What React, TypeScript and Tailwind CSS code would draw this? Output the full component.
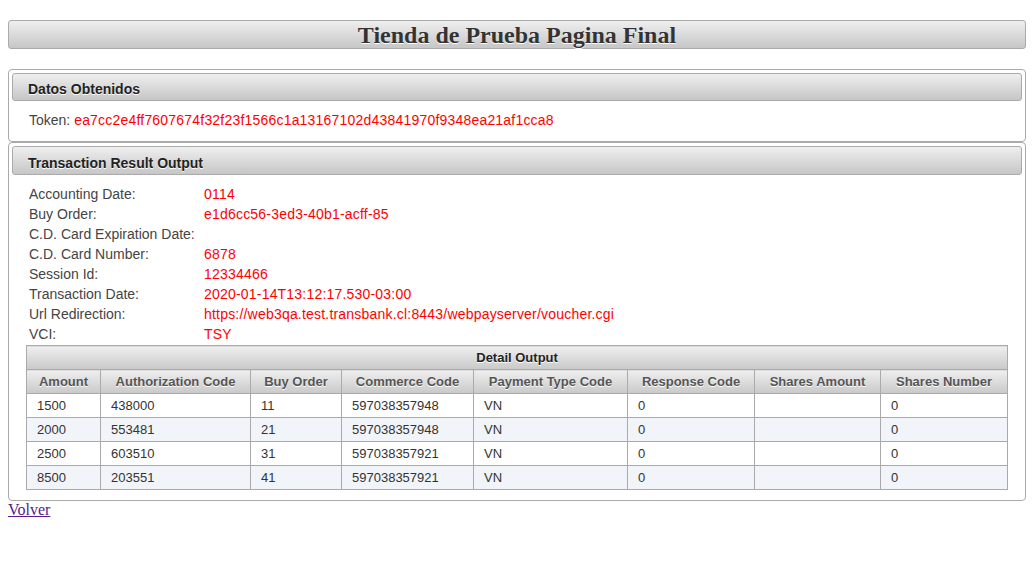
import React from "react";

const fields: [string, string][] = [
  ["Accounting Date:", "0114"],
  ["Buy Order:", "e1d6cc56-3ed3-40b1-acff-85"],
  ["C.D. Card Expiration Date:", ""],
  ["C.D. Card Number:", "6878"],
  ["Session Id:", "12334466"],
  ["Transaction Date:", "2020-01-14T13:12:17.530-03:00"],
  ["Url Redirection:", "https://web3qa.test.transbank.cl:8443/webpayserver/voucher.cgi"],
  ["VCI:", "TSY"],
];

const cols: { name: string; w: string }[] = [
  { name: "Amount", w: "w-[74px]" },
  { name: "Authorization Code", w: "w-[150px]" },
  { name: "Buy Order", w: "w-[91px]" },
  { name: "Commerce Code", w: "w-[132px]" },
  { name: "Payment Type Code", w: "w-[154px]" },
  { name: "Response Code", w: "w-[127px]" },
  { name: "Shares Amount", w: "w-[126px]" },
  { name: "Shares Number", w: "w-[127px]" },
];

const rows: string[][] = [
  ["1500", "438000", "11", "597038357948", "VN", "0", "", "0"],
  ["2000", "553481", "21", "597038357948", "VN", "0", "", "0"],
  ["2500", "603510", "31", "597038357921", "VN", "0", "", "0"],
  ["8500", "203551", "41", "597038357921", "VN", "0", "", "0"],
];

function PanelHeader({ children, cls }: { children: React.ReactNode; cls: string }) {
  return (
    <div
      className={`border border-[#aaaaaa] rounded-[3px] bg-linear-to-b from-[#efefef] to-[#c6c6c6] pl-[15px] ${cls} text-[14px] leading-[18px] font-bold text-[#222222] [text-shadow:0_1px_0_#ffffff]`}
    >
      {children}
    </div>
  );
}

export default function App() {
  return (
    <div className="bg-white min-h-[576px] px-2 pt-5 font-['Liberation_Sans',Arial,sans-serif]">
      <div className="h-[29px] border border-[#aaaaaa] rounded-[3px] bg-linear-to-b from-[#efefef] to-[#c6c6c6] flex items-center justify-center">
        <h1 className="font-['Liberation_Serif','Times_New_Roman',serif] font-bold text-[24px] leading-none text-[#333333] [text-shadow:0_1px_0_#ffffff]">
          Tienda de Prueba Pagina Final
        </h1>
      </div>

      <div className="mt-5 border border-[#aaaaaa] rounded-[4px] p-[3px]">
        <PanelHeader cls="h-[28px] pt-[6px]">Datos Obtenidos</PanelHeader>
        <div className="pl-[17px] pt-[9px] pb-[8px] text-[14px] leading-[20px]">
          <span className="text-[#444444]">Token: </span>
          <span className="text-[#ff0000] tracking-[0.2px]">ea7cc2e4ff7607674f32f23f1566c1a13167102d43841970f9348ea21af1cca8</span>
        </div>
      </div>

      <div className="border border-[#aaaaaa] rounded-[4px] p-[3px]">
        <PanelHeader cls="h-[29px] pt-[7px]">Transaction Result Output</PanelHeader>
        <div className="pl-[17px] pt-[9px] text-[14px] leading-[20px]">
          {fields.map(([k, v]) => (
            <div key={k} className="flex">
              <span className="w-[175px] shrink-0 text-[#444444]">{k}</span>
              <span className="text-[#ff0000] tracking-[0.2px]">{v}</span>
            </div>
          ))}
        </div>
        <div className="pl-[14px] pr-[14px] pt-[1px] pb-[7px]">
          <table className="w-full table-fixed border-collapse text-[13px] text-[#333333]">
            <colgroup>
              {cols.map((c) => (
                <col key={c.name} className={c.w} />
              ))}
            </colgroup>
            <thead>
              <tr>
                <th
                  colSpan={8}
                  className="h-[24px] border border-[#aaaaaa] bg-linear-to-b from-[#efefef] to-[#c9c9c9] text-[13px] font-bold text-[#222222] [text-shadow:0_1px_0_#ffffff]"
                >
                  Detail Output
                </th>
              </tr>
              <tr>
                {cols.map((c) => (
                  <th
                    key={c.name}
                    className="h-[24px] border border-[#aaaaaa] bg-linear-to-b from-[#efefef] to-[#c9c9c9] font-bold text-[#555555] [text-shadow:0_1px_0_#ffffff] whitespace-nowrap"
                  >
                    {c.name}
                  </th>
                ))}
              </tr>
            </thead>
            <tbody>
              {rows.map((r, i) => (
                <tr key={i} className={i % 2 === 1 ? "bg-[#f1f4f8]" : "bg-white"}>
                  {r.map((cell, j) => (
                    <td key={j} className="h-[24px] border border-[#aaaaaa] pl-[10px] text-left">
                      {cell}
                    </td>
                  ))}
                </tr>
              ))}
            </tbody>
          </table>
        </div>
      </div>

      <div className="font-['Liberation_Serif','Times_New_Roman',serif] text-[16px] leading-[17px]">
        <a href="#" className="text-[#551a8b] underline">
          Volver
        </a>
      </div>
    </div>
  );
}
